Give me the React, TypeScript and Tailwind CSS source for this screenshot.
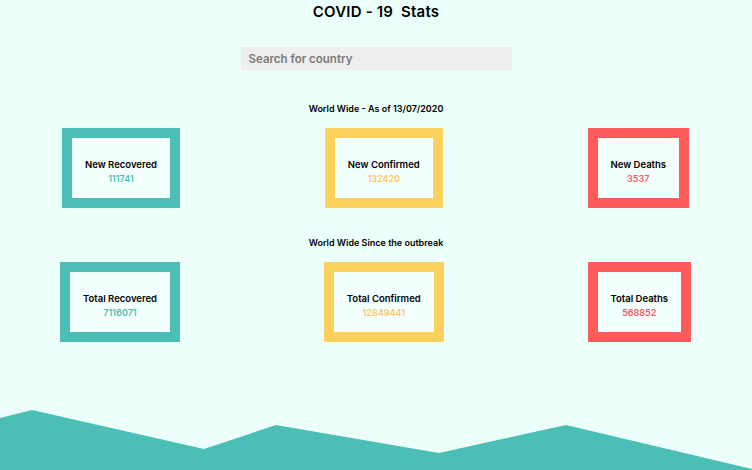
const font = { fontFamily: "Inter, 'Noto Sans', sans-serif" };

type StatCardProps = {
  label: string;
  value: string;
  tone: 'teal' | 'yellow' | 'red';
};

const tones = {
  teal: { border: 'border-[#4bbfb5]', text: 'text-[#4bbfb5]' },
  yellow: { border: 'border-[#fcd05c]', text: 'text-[#fcc95c]' },
  red: { border: 'border-[#ff5b5b]', text: 'text-[#f25c5c]' },
};

function StatCard({ label, value, tone }: StatCardProps) {
  const t = tones[tone];
  return (
    <div
      className={`flex h-[80px] flex-col items-center justify-center border-[10px] bg-[#f3fffd] px-[13px] pt-[7px] ${t.border}`}
    >
      <div className="text-[9.5px] leading-[14px] font-semibold text-black">{label}</div>
      <div className={`text-[9px] leading-[14px] font-semibold ${t.text}`}>{value}</div>
    </div>
  );
}

function Wave() {
  return (
    <svg className="block h-[62px] w-full" viewBox="0 408 752 62" preserveAspectRatio="none">
      <polygon
        points="0,418 32,410 204,449 276,425 439,453 566,425 752,469 752,470 0,470"
        fill="#4bbfb5"
      />
    </svg>
  );
}

export default function App() {
  return (
    <div className="relative flex h-[470px] w-[752px] flex-col overflow-hidden bg-[#ecfffb]" style={font}>
      <h1 className="pt-[2px] text-center text-[15px] leading-[20px] font-semibold tracking-[0.2px] text-black">
        COVID - 19&nbsp; Stats
      </h1>

      <div className="mt-[25px] flex justify-center">
        <input
          className="h-[23px] w-[271px] bg-[#eeeeee] px-[8px] text-[11.5px] font-semibold text-[#333] placeholder:text-[#7a7a7a] outline-none"
          placeholder="Search for country"
        />
      </div>

      <p className="mt-[33px] text-center text-[9px] leading-[12px] font-semibold text-black">
        World Wide - As of 13/07/2020
      </p>

      <div className="mt-[13px] flex justify-between pr-[63px] pl-[62px]">
        <StatCard label="New Recovered" value="111741" tone="teal" />
        <StatCard label="New Confirmed" value="132420" tone="yellow" />
        <StatCard label="New Deaths" value="3537" tone="red" />
      </div>

      <p className="mt-[29px] text-center text-[9px] leading-[12px] font-semibold text-black">
        World Wide Since the outbreak
      </p>

      <div className="mt-[13px] flex justify-between pr-[61px] pl-[60px]">
        <StatCard label="Total Recovered" value="7116071" tone="teal" />
        <StatCard label="Total Confirmed" value="12849441" tone="yellow" />
        <StatCard label="Total Deaths" value="568852" tone="red" />
      </div>

      <div className="absolute right-0 bottom-0 left-0">
        <Wave />
      </div>
    </div>
  );
}
